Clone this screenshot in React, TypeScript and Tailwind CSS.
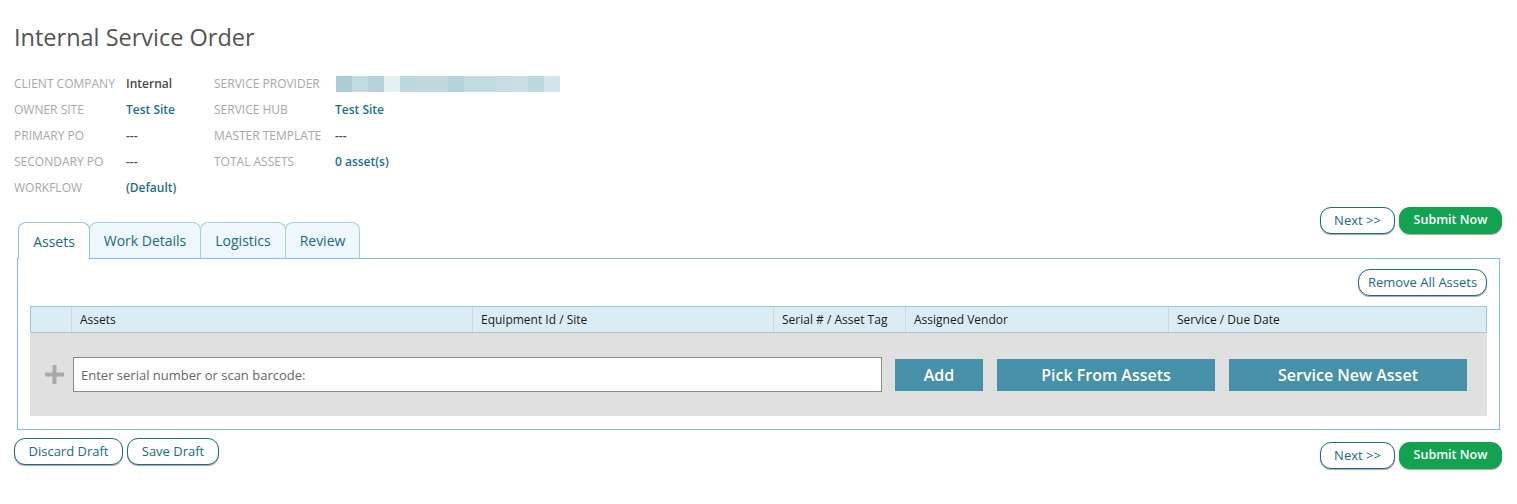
import React from "react";

const font = { fontFamily: '"Open Sans", "Noto Sans", sans-serif' };

const blur = [
  "#afcdd6", "#c1dce1", "#b6d2da", "#e4f1f1", "#bcd8dd", "#bfd9de", "#bfd9de",
  "#b4d3db", "#c1dbe0", "#c1dbe1", "#c6dee2", "#cadfe4", "#bcd8dd", "#d3e5ea",
];

function Label({ children }: { children: React.ReactNode }) {
  return <div className="text-[12px] uppercase text-[#a8a8a8] leading-[26px]">{children}</div>;
}

function Value({ children, link }: { children: React.ReactNode; link?: boolean }) {
  return (
    <div className={`text-[12px] font-semibold leading-[26px] ${link ? "text-[#1b6f8c]" : "text-[#4a4a4a]"}`}>
      {children}
    </div>
  );
}

function OutlineBtn({ children, className = "" }: { children: React.ReactNode; className?: string }) {
  return (
    <button
      className={`h-[27px] rounded-[11px] border border-[#1f6b87] bg-white text-[13px] text-[#1b6a85] shadow-[0_1px_1px_rgba(0,0,0,0.35)] ${className}`}
    >
      {children}
    </button>
  );
}

function GreenBtn({ className = "" }: { className?: string }) {
  return (
    <button
      className={`h-[27px] w-[103px] rounded-[11px] bg-[#13a24f] text-[12.5px] font-semibold text-white shadow-[0_1px_1px_rgba(0,0,0,0.35)] ${className}`}
    >
      Submit Now
    </button>
  );
}

export default function App() {
  const tabs = ["Assets", "Work Details", "Logistics", "Review"];
  const tabW = ["w-[72px]", "w-[112px]", "w-[86px]", "w-[75px]"];
  return (
    <div className="min-h-[504px] w-[1517px] bg-white" style={font}>
      <div className="px-[14px] pt-[22px]">
        <h1 className="text-[23.5px] leading-[30px] text-[#555452]">Internal Service Order</h1>

        <div className="mt-[19px] grid grid-cols-[112px_88px_121px_1fr]">
          <Label>Client Company</Label>
          <Value>Internal</Value>
          <Label>Service Provider</Label>
          <div className="flex items-center">
            <div className="ml-[1px] flex h-[16px]">
              {blur.map((c, i) => (
                <div key={i} className="h-full w-[16px]" style={{ backgroundColor: c }} />
              ))}
            </div>
          </div>

          <Label>Owner Site</Label>
          <Value link>Test Site</Value>
          <Label>Service Hub</Label>
          <Value link>Test Site</Value>

          <Label>Primary PO</Label>
          <Value>---</Value>
          <Label>Master Template</Label>
          <Value>---</Value>

          <Label>Secondary PO</Label>
          <Value>---</Value>
          <Label>Total Assets</Label>
          <Value link>0 asset(s)</Value>

          <Label>Workflow</Label>
          <Value link>(Default)</Value>
        </div>
      </div>

      <div className="relative mt-[6px] pl-[17px] pr-[17px]">
        <div className="absolute right-[15px] top-0 flex gap-[4px]">
          <OutlineBtn className="w-[75px]">Next &gt;&gt;</OutlineBtn>
          <GreenBtn />
        </div>

        <div className="flex pl-[1px] pt-[15px]">
          {tabs.map((t, i) => (
            <div
              key={t}
              className={`${tabW[i]} relative -mr-px flex h-[36px] items-center justify-center rounded-t-[8px] border border-b-0 text-[14px] ${
                i === 0
                  ? "z-10 -mb-px h-[37px] border-[#8fc6dc] bg-white text-[#1b6a85]"
                  : "border-[#a9cfdc] bg-[#eef8fc] text-[#1b6a85]"
              }`}
            >
              {t}
            </div>
          ))}
        </div>

        <div className="border border-[#7cc4de] px-[12px] pb-[13px] pt-[10px]">
          <div className="flex justify-end">
            <OutlineBtn className="h-[24px] w-[129px] rounded-[12px] text-[13px]">Remove All Assets</OutlineBtn>
          </div>

          <div className="mt-[10px]">
            <div className="grid h-[27px] grid-cols-[41px_401px_301px_132px_263px_1fr] border border-[#9cc9da] border-b-[#b9c4c8] bg-[#daedf5] text-[12px] text-[#1a1a1a]">
              <div className="border-r border-[#cfd8dc]" />
              <div className="flex items-center border-r border-[#cfd8dc] px-[8px]">Assets</div>
              <div className="flex items-center border-r border-[#cfd8dc] px-[8px]">Equipment Id / Site</div>
              <div className="flex items-center border-r border-[#cfd8dc] px-[8px]">Serial # / Asset Tag</div>
              <div className="flex items-center border-r border-[#cfd8dc] px-[8px]">Assigned Vendor</div>
              <div className="flex items-center px-[8px]">Service / Due Date</div>
            </div>
            <div className="flex h-[83px] items-center bg-[#e0e0e0] pl-[15px] pr-[19px]">
              <svg width="19" height="19" viewBox="0 0 19 19" className="mr-[9px] shrink-0">
                <rect x="7.5" y="0" width="4" height="19" fill="#a9a9a9" />
                <rect x="0" y="7.5" width="19" height="4" fill="#a9a9a9" />
              </svg>
              <input
                className="h-[35px] w-[809px] shrink-0 border border-[#8a8a8a] bg-white px-[7px] text-[13px] text-[#555] outline-none placeholder:text-[#666]"
                placeholder="Enter serial number or scan barcode:"
                style={font}
              />
              <button className="ml-[13px] h-[32px] w-[88px] bg-[#4690a8] text-[16px] font-semibold text-white">Add</button>
              <button className="ml-[14px] h-[32px] w-[218px] bg-[#4690a8] text-[16px] font-semibold text-white">
                Pick From Assets
              </button>
              <button className="ml-[14px] h-[32px] w-[238px] bg-[#4690a8] text-[16px] font-semibold text-white">
                Service New Asset
              </button>
            </div>
          </div>
        </div>
      </div>

      <div className="mt-[8px] flex items-start justify-between pl-[14px] pr-[15px]">
        <div className="flex gap-[4px]">
          <OutlineBtn className="w-[109px]">Discard Draft</OutlineBtn>
          <OutlineBtn className="w-[92px]">Save Draft</OutlineBtn>
        </div>
        <div className="mt-[4px] flex gap-[4px]">
          <OutlineBtn className="w-[75px]">Next &gt;&gt;</OutlineBtn>
          <GreenBtn />
        </div>
      </div>
    </div>
  );
}
